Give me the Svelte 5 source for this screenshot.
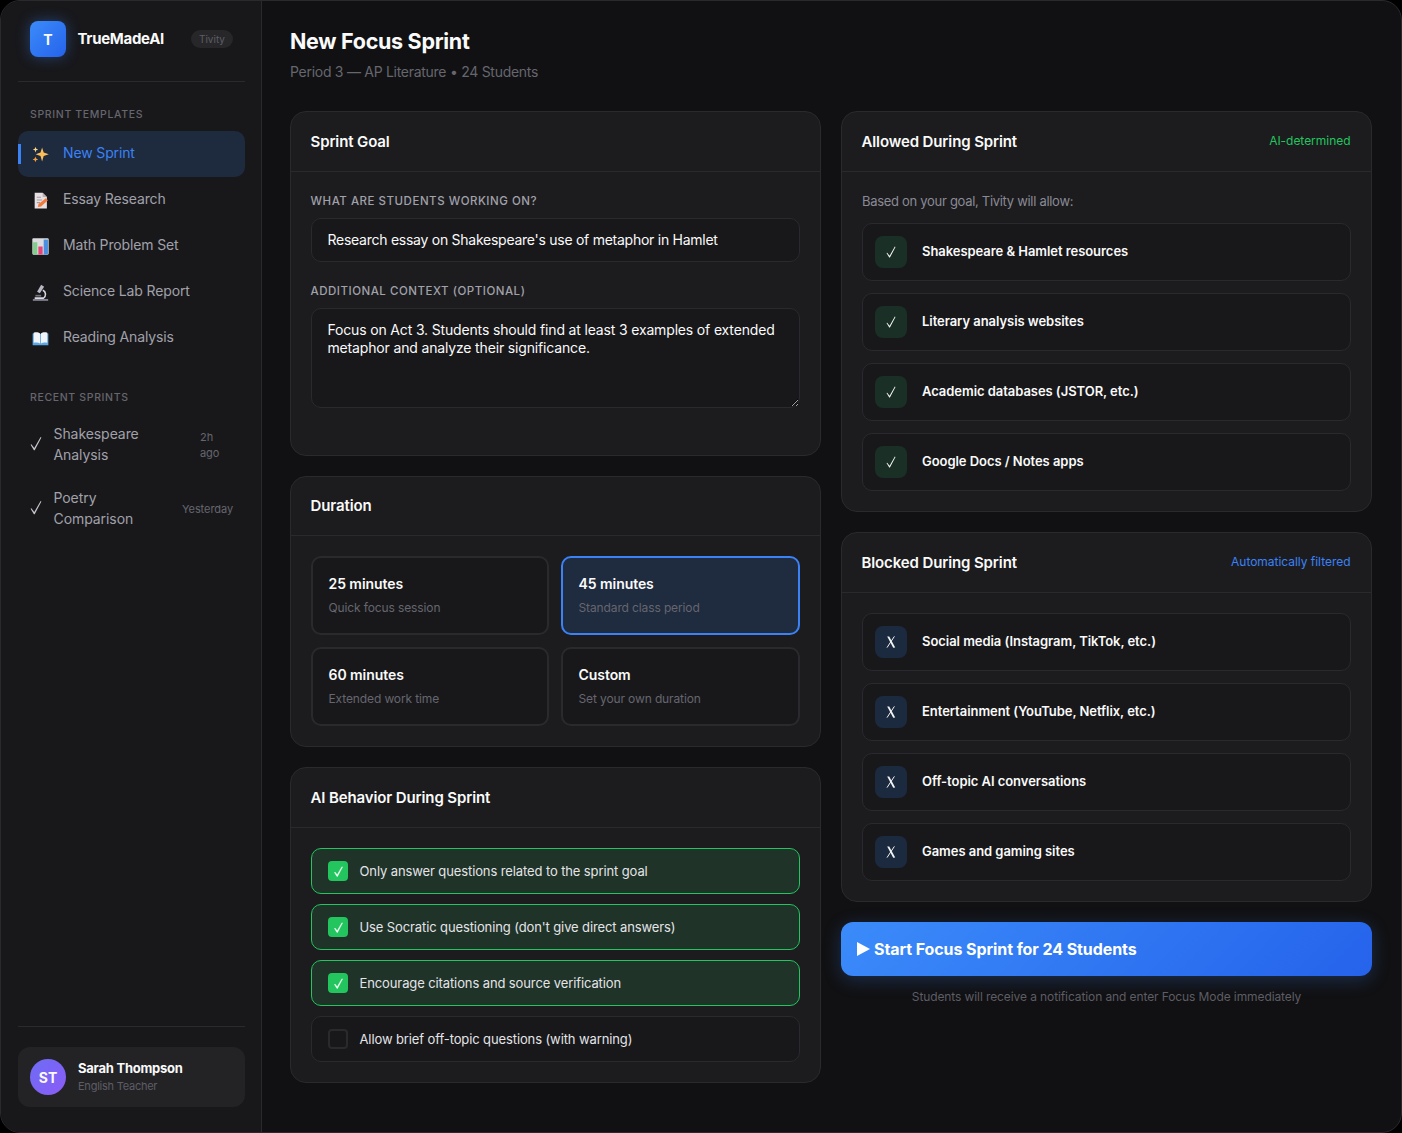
<script>
  const templates = ['New Sprint', 'Essay Research', 'Math Problem Set', 'Science Lab Report', 'Reading Analysis'];
  const recent = [
    { name: 'Shakespeare Analysis', time: '2h ago', narrow: true },
    { name: 'Poetry Comparison', time: 'Yesterday', narrow: false }
  ];
  const durations = [
    { t: '25 minutes', d: 'Quick focus session' },
    { t: '45 minutes', d: 'Standard class period', on: true },
    { t: '60 minutes', d: 'Extended work time' },
    { t: 'Custom', d: 'Set your own duration' }
  ];
  const behaviors = [
    { t: 'Only answer questions related to the sprint goal', on: true },
    { t: "Use Socratic questioning (don't give direct answers)", on: true },
    { t: 'Encourage citations and source verification', on: true },
    { t: 'Allow brief off-topic questions (with warning)', on: false }
  ];
  const allowed = ['Shakespeare & Hamlet resources', 'Literary analysis websites', 'Academic databases (JSTOR, etc.)', 'Google Docs / Notes apps'];
  const blocked = ['Social media (Instagram, TikTok, etc.)', 'Entertainment (YouTube, Netflix, etc.)', 'Off-topic AI conversations', 'Games and gaming sites'];
</script>

{#snippet check(w, h)}
  <svg viewBox="0 0 12 14" width={w} height={h} fill="currentColor">
    <path d="M.6 8.3 1.4 7.8 4.3 11.4 10.6.5 11.4 1 4.7 13.7H3.9Z"/>
  </svg>
{/snippet}

{#snippet cross()}
  <svg class="cross" viewBox="0 0 10 12" width="10" height="12" fill="currentColor">
    <path d="M1.2.4H3.2L9.2 11.4 7.2 11.8Z"/>
    <path d="M8.4.4 1 11.6" stroke="currentColor" stroke-width="1" fill="none"/>
  </svg>
{/snippet}

<div class="frame">
  <aside class="sidebar">
    <div class="brand">
      <div class="logo">T</div>
      <span class="brand-name">TrueMadeAI</span>
      <span class="pill">Tivity</span>
    </div>

    <div class="section-title first">SPRINT TEMPLATES</div>
    <nav>
      {#each templates as item, i}
        <div class="nav-item" class:active={i === 0}>
          <svg class="emoji" viewBox="0 0 16 16" width="17" height="17">
            {#if i === 0}
              <path d="M9.5 1.5 11 6 15.8 7.8 11 9.5 9.5 14.5 8 9.5 3.4 7.8 8 6Z" fill="#fbbf5a"/>
              <path d="M3.3 .6 4 2.6 5.9 3.3 4 4 3.3 6 2.6 4 .7 3.3 2.6 2.6Z" fill="#fdd68a"/>
              <path d="M3.2 9.8 3.9 11.8 5.8 12.6 3.9 13.3 3.2 15.4 2.5 13.3.6 12.6 2.5 11.8Z" fill="#f59e3c"/>
            {:else if i === 1}
              <path d="M2.5 .8h7.5L14 4.8V15.5H2.5Z" fill="#e6e0e2"/>
              <path d="M10 .8v4h4Z" fill="#b9aeb4"/>
              <path d="M4.5 5h4M4.5 7.5h5M4.5 10h3" stroke="#a79aa2" stroke-width="1"/>
              <path d="M5.5 14 6.2 11.4 13 5.8 15 7.8 8.5 13.6Z" fill="#f2793c"/>
            {:else if i === 2}
              <rect x="0.3" y="0.3" width="15.4" height="15.4" rx="1" fill="#dcdce0"/>
              <rect x="1" y="4" width="4" height="11.5" fill="#7fce8a"/>
              <rect x="6" y="8" width="4" height="7.5" fill="#e8447a"/>
              <rect x="11" y="1.5" width="4" height="14" fill="#4a8fe0"/>
            {:else if i === 3}
              <path d="M.8 15.8h14.4v-1.6H.8Z" fill="#8a8a9a"/>
              <path d="M8.6.8 11.4 2.6 7.4 8.8 4.8 7.2Z" fill="#b8b8c4"/>
              <path d="M10.6 5.2A5 5 0 0 1 11 14H2.5v-1.5h8.4A3.6 3.6 0 0 0 9.8 6.6Z" fill="#d8d8e0"/>
              <path d="M3.2 10.2h5.4v1.6H3.2Z" fill="#71717f"/>
            {:else}
              <path d="M.6 3.4C3 2.4 6 2.6 8 3.8c2-1.2 5-1.4 7.4-.4V14.4H.6Z" fill="#5aa6e6"/>
              <path d="M1.6 2.5C3.6 1.8 6.2 2 7.6 3.2V12.6C6 11.6 3.6 11.5 1.6 12.1Z" fill="#f2f4f8"/>
              <path d="M14.4 2.5C12.4 1.8 9.8 2 8.4 3.2V12.6C10 11.6 12.4 11.5 14.4 12.1Z" fill="#f2f4f8"/>
            {/if}
          </svg>
          <span class="nav-label">{item}</span>
        </div>
      {/each}
    </nav>

    <div class="section-title second">RECENT SPRINTS</div>
    {#each recent as r}
      <div class="recent">
        <span class="recent-check">{@render check(12, 15)}</span>
        <span class="recent-name">{r.name}</span>
        <span class="recent-time" class:narrow={r.narrow}>{r.time}</span>
      </div>
    {/each}

    <div class="user-wrap">
      <div class="user">
        <div class="avatar">ST</div>
        <div>
          <div class="user-name">Sarah Thompson</div>
          <div class="user-role">English Teacher</div>
        </div>
      </div>
    </div>
  </aside>

  <main>
    <header>
      <h1>New Focus Sprint</h1>
      <p>Period 3 — AP Literature • 24 Students</p>
    </header>

    <div class="columns">
      <div class="col">
        <section class="card goal">
          <div class="card-head"><h2>Sprint Goal</h2></div>
          <div class="card-body">
            <label for="goal">WHAT ARE STUDENTS WORKING ON?</label>
            <input id="goal" value="Research essay on Shakespeare's use of metaphor in Hamlet" />
            <label for="ctx" class="second-label">ADDITIONAL CONTEXT (OPTIONAL)</label>
            <textarea id="ctx">Focus on Act 3. Students should find at least 3 examples of extended metaphor and analyze their significance.</textarea>
          </div>
        </section>

        <section class="card">
          <div class="card-head short"><h2>Duration</h2></div>
          <div class="card-body durations">
            {#each durations as d}
              <div class="duration" class:on={d.on}>
                <div class="d-title">{d.t}</div>
                <div class="d-desc">{d.d}</div>
              </div>
            {/each}
          </div>
        </section>

        <section class="card">
          <div class="card-head"><h2>AI Behavior During Sprint</h2></div>
          <div class="card-body behaviors">
            {#each behaviors as b}
              <div class="behavior" class:on={b.on}>
                <span class="box">{#if b.on}{@render check(9, 11)}{/if}</span>
                <span>{b.t}</span>
              </div>
            {/each}
          </div>
        </section>
      </div>

      <div class="col">
        <section class="card">
          <div class="card-head">
            <h2>Allowed During Sprint</h2>
            <span class="tag green">AI-determined</span>
          </div>
          <div class="card-body rules">
            <p class="based">Based on your goal, Tivity will allow:</p>
            {#each allowed as a}
              <div class="rule">
                <span class="rule-icon ok">{@render check(10, 12)}</span>
                <span class="rule-text">{a}</span>
              </div>
            {/each}
          </div>
        </section>

        <section class="card">
          <div class="card-head">
            <h2>Blocked During Sprint</h2>
            <span class="tag blue">Automatically filtered</span>
          </div>
          <div class="card-body rules">
            {#each blocked as a}
              <div class="rule">
                <span class="rule-icon no">{@render cross()}</span>
                <span class="rule-text">{a}</span>
              </div>
            {/each}
          </div>
        </section>

        <button class="start">
          <svg viewBox="0 0 13 14" width="13" height="14" fill="#fff"><path d="M0 0 13 7 0 14Z"/></svg>
          Start Focus Sprint for 24 Students
        </button>
        <p class="note">Students will receive a notification and enter Focus Mode immediately</p>
      </div>
    </div>
  </main>
</div>

<style>
  :global(body) {
    background: #000;
    font-family: Inter, "Noto Sans", sans-serif;
  }
  .frame {
    box-sizing: border-box;
    width: 1402px;
    height: 1133px;
    display: flex;
    border: 1px solid #2a2a2e;
    border-radius: 20px;
    overflow: hidden;
    background: #111113;
    color: #fafafa;
  }
  .sidebar {
    box-sizing: border-box;
    width: 261px;
    flex: none;
    background: #18181b;
    border-right: 1px solid #2a2a2e;
    padding: 20px 16px 25px 17px;
    display: flex;
    flex-direction: column;
  }
  .brand {
    display: flex;
    align-items: center;
    padding: 0 12px 24px;
    border-bottom: 1px solid #2a2a2e;
  }
  .logo {
    width: 36px;
    height: 36px;
    border-radius: 8px;
    background: linear-gradient(135deg, #3b8bfa, #2563eb);
    box-shadow: 0 0 14px rgba(59, 130, 246, .4);
    display: flex;
    align-items: center;
    justify-content: center;
    font-weight: 700;
    font-size: 14px;
    flex: none;
  }
  .brand-name {
    margin-left: 11.5px;
    font-size: 15px;
    font-weight: 700;
    letter-spacing: -0.3px;
    padding-bottom: 1px;
  }
  .pill {
    margin-left: auto;
    background: #27272a;
    color: #5d5d65;
    font-size: 10px;
    padding: 3px 8px;
    border-radius: 10px;
  }
  .section-title {
    padding-left: 12px;
    font-size: 10.5px;
    font-weight: 500;
    letter-spacing: 0.65px;
    color: #66666e;
    line-height: 14px;
  }
  .section-title.first { margin: 26px 0 9px; }
  .section-title.second { margin: 30px 0 7px; }
  .nav-item {
    position: relative;
    height: 46px;
    display: flex;
    align-items: center;
    padding-left: 14px;
    gap: 14px;
    font-size: 14px;
    letter-spacing: -0.14px;
    color: #a1a1aa;
    border-radius: 10px;
  }
  .nav-label { padding-bottom: 4px; }
  .nav-item.active {
    background: #1e2a3e;
    color: #3b82f6;
  }
  .nav-item.active::before {
    content: '';
    position: absolute;
    left: 0;
    top: 13px;
    width: 3px;
    height: 20px;
    background: #3b82f6;
  }
  .recent {
    display: flex;
    align-items: center;
    padding: 11px 12px;
    font-size: 14px;
    line-height: 21px;
    letter-spacing: -0.07px;
    color: #a1a1aa;
  }
  .recent-check {
    width: 23.5px;
    flex: none;
    display: flex;
    margin-top: -2px;
    color: #c4c4cc;
  }
  .recent-name { flex: 1; min-width: 0; }
  .recent-time {
    font-size: 11px;
    line-height: 16px;
    color: #66666e;
    margin: 2px 0 0 8px;
  }
  .recent-time.narrow { width: 33px; }
  .user-wrap {
    margin-top: auto;
    border-top: 1px solid #2a2a2e;
    padding-top: 20px;
  }
  .user {
    height: 60px;
    box-sizing: border-box;
    display: flex;
    align-items: center;
    gap: 12px;
    padding: 0 12px;
    background: #232326;
    border-radius: 12px;
  }
  .avatar {
    width: 36px;
    height: 36px;
    border-radius: 50%;
    background: linear-gradient(135deg, #6d6cf5, #8b5cf6);
    display: flex;
    align-items: center;
    justify-content: center;
    font-weight: 700;
    font-size: 14px;
    flex: none;
  }
  .user-name {
    font-size: 13px;
    font-weight: 700;
    line-height: 17px;
    letter-spacing: -0.24px;
  }
  .user-role {
    margin-top: 1px;
    font-size: 11px;
    color: #5d5d65;
    line-height: 17px;
    letter-spacing: -0.24px;
  }
  main {
    flex: 1;
    min-width: 0;
    padding: 24px 29px 0 28px;
  }
  header { margin-bottom: 30px; }
  h1 {
    margin: 0;
    font-size: 21.5px;
    font-weight: 700;
    line-height: 32px;
    letter-spacing: -0.3px;
  }
  header p {
    margin: 6px 0 0;
    font-size: 14px;
    line-height: 18px;
    letter-spacing: -0.28px;
    color: #66666e;
  }
  .columns {
    display: grid;
    grid-template-columns: 531px 531px;
    gap: 20px;
  }
  .col {
    display: flex;
    flex-direction: column;
    gap: 20px;
  }
  .card {
    background: #1c1c1f;
    border: 1px solid #2a2a2e;
    border-radius: 16px;
  }
  .card-head {
    box-sizing: border-box;
    height: 60px;
    display: flex;
    align-items: center;
    justify-content: space-between;
    padding: 0 20.5px 1px 19.5px;
    border-bottom: 1px solid #2a2a2e;
  }
  .card-head.short { height: 59px; }
  h2 {
    margin: 0;
    font-size: 15px;
    font-weight: 600;
    letter-spacing: -0.12px;
  }
  .tag {
    font-size: 12px;
    font-weight: 400;
    letter-spacing: -0.03px;
    margin-bottom: 1px;
  }
  .green { color: #22c55e; }
  .blue { color: #3b82f6; }
  .card-body { padding: 20px; }
  label {
    display: block;
    font-size: 11.5px;
    font-weight: 500;
    letter-spacing: 0.52px;
    line-height: 18px;
    color: #a1a1aa;
    margin: 0 0 8px -0.5px;
  }
  .goal .card-body { padding-bottom: 47px; }
  .second-label { margin-top: 20px; }
  input, textarea {
    display: block;
    box-sizing: border-box;
    width: 100%;
    background: #18181b;
    border: 1px solid #2a2a2e;
    border-radius: 10px;
    color: #fafafa;
    font: 400 14px/18px Inter, sans-serif;
    letter-spacing: -0.26px;
    padding: 11px 15.5px 13px;
    outline: none;
  }
  input { height: 44px; }
  textarea {
    height: 100px;
    resize: vertical;
    padding: 12px 15.5px;
    letter-spacing: -0.16px;
  }
  .durations {
    display: grid;
    grid-template-columns: 238px 1fr;
    gap: 12px;
  }
  .duration {
    box-sizing: border-box;
    height: 79px;
    padding: 16px 15.5px;
    background: #18181b;
    border: 2px solid #2a2a2e;
    border-radius: 10px;
  }
  .duration.on {
    background: #1f2b3f;
    border-color: #3b82f6;
  }
  .d-title {
    font-size: 14px;
    font-weight: 600;
    line-height: 20px;
    letter-spacing: -0.06px;
  }
  .d-desc {
    margin-top: 6px;
    font-size: 12px;
    line-height: 16px;
    letter-spacing: -0.12px;
    color: #66666e;
  }
  .behaviors {
    display: flex;
    flex-direction: column;
    gap: 10px;
  }
  .behavior {
    box-sizing: border-box;
    height: 46px;
    display: flex;
    align-items: center;
    gap: 11.5px;
    padding: 0 16px;
    font-size: 13px;
    letter-spacing: -0.11px;
    color: #e4e4e7;
    background: #18181b;
    border: 1px solid #2a2a2e;
    border-radius: 10px;
  }
  .behavior > span:last-child { padding-bottom: 1px; }
  .behavior.on {
    background: #1f3329;
    border-color: #22c55e;
  }
  .box {
    box-sizing: border-box;
    width: 20px;
    height: 20px;
    flex: none;
    display: flex;
    align-items: center;
    justify-content: center;
    border-radius: 4px;
    border: 2px solid #2a2a2e;
    color: #fff;
    stroke: #fff;
    stroke-width: .5px;
  }
  .on .box {
    background: #22c55e;
    border-color: #22c55e;
  }
  .rules {
    display: flex;
    flex-direction: column;
    gap: 12px;
  }
  .based {
    margin: -1px 0 0;
    font-size: 13px;
    line-height: 20px;
    letter-spacing: -0.3px;
    color: #8a8a94;
  }
  .rule {
    box-sizing: border-box;
    height: 58px;
    display: flex;
    align-items: center;
    gap: 15px;
    padding: 0 12px;
    font-size: 13px;
    font-weight: 600;
    letter-spacing: -0.05px;
    background: #18181b;
    border: 1px solid #2a2a2e;
    border-radius: 10px;
  }
  .rule-text { padding-bottom: 2px; }
  .rule-icon {
    width: 32px;
    height: 32px;
    flex: none;
    display: flex;
    align-items: center;
    justify-content: center;
    border-radius: 8px;
    color: #f4f4f5;
  }
  .cross { margin-right: 1px; }
  .ok { background: #1a2f25; }
  .no { background: #1c2a3f; }
  .start {
    height: 54px;
    display: flex;
    align-items: center;
    gap: 4px;
    padding: 0 16px;
    border: 0;
    border-radius: 12px;
    background: linear-gradient(135deg, #3b8bfa, #2563eb);
    box-shadow: 0 4px 18px rgba(59, 130, 246, .25);
    color: #fff;
    font: 700 16px Inter, sans-serif;
    letter-spacing: -0.08px;
  }
  .note {
    margin: -8px 0 0;
    text-align: center;
    font-size: 12px;
    line-height: 18px;
    color: #5d5d65;
    letter-spacing: -0.1px;
  }
</style>
